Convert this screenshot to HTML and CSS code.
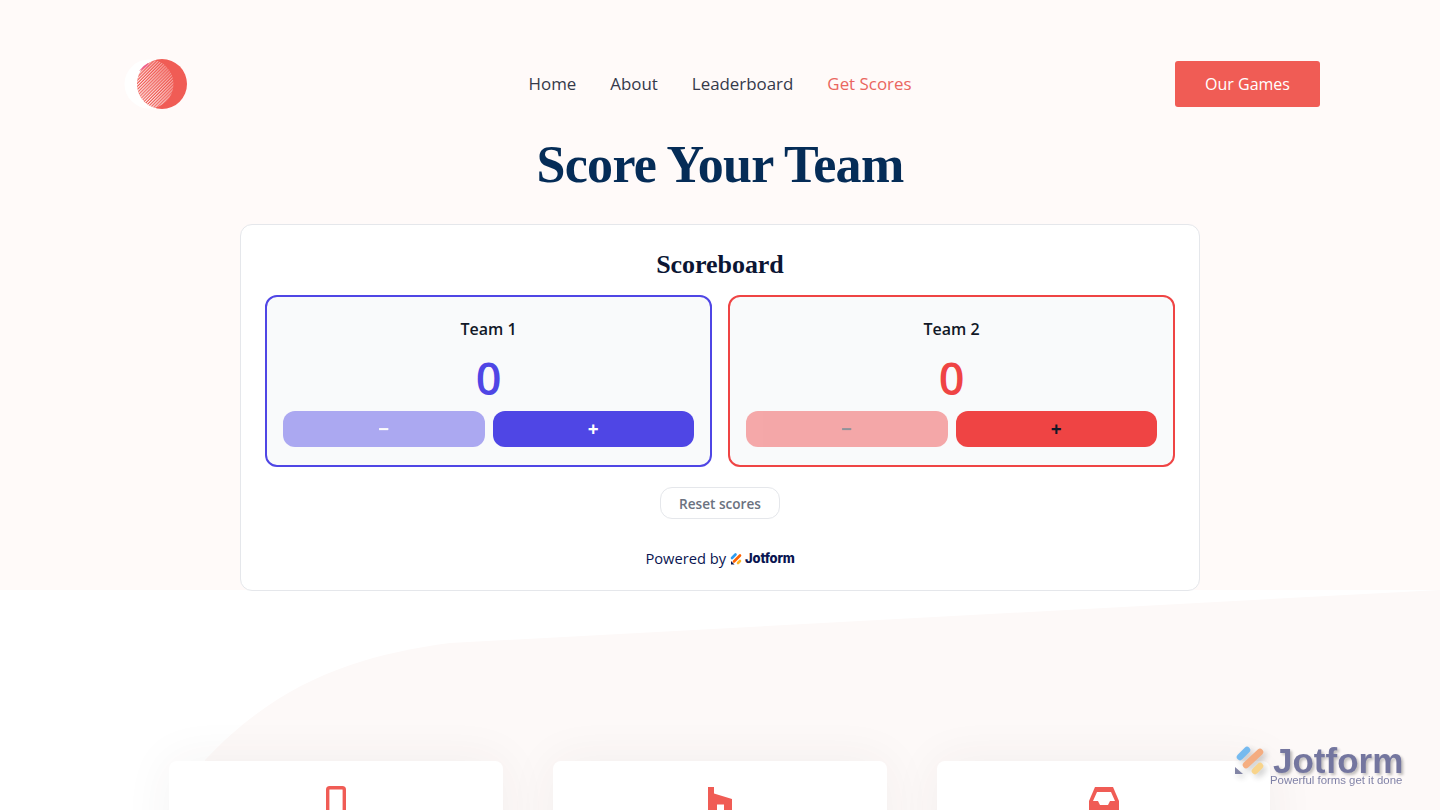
FILE: index.html
```html
<!DOCTYPE html>
<html lang="en">
<head>
<meta charset="utf-8">
<title>Score Your Team</title>
<link rel="stylesheet" href="styles.css">
</head>
<body>
<section class="hero">
  <header class="nav">
    <svg class="logo" width="64" height="52" viewBox="0 0 64 52" aria-hidden="true">
      <defs>
        <clipPath id="lens"><circle cx="26" cy="26" r="24.5"/></clipPath>
        <linearGradient id="fade" x1="0" y1="1" x2="1" y2="0.2"><stop offset="0.1" stop-color="#fff"/><stop offset="0.95" stop-color="#555"/></linearGradient>
        <mask id="fade-mask" maskUnits="userSpaceOnUse" x="0" y="0" width="64" height="52"><rect x="14" y="1" width="38" height="50" fill="url(#fade)"/></mask>
        <pattern id="hatch" width="2.2" height="2.2" patternUnits="userSpaceOnUse" patternTransform="rotate(-45)"><rect width="2.2" height="1.1" fill="#fff"/></pattern>
      </defs>
      <circle cx="26" cy="26" r="24.5" fill="#fff"/>
      <circle cx="39" cy="26" r="25" fill="#f05c55"/>
      <g clip-path="url(#lens)">
        <path d="M25 5 A25 25 0 0 0 16 13 L26 8 Z" fill="#e8306f" fill-opacity=".75"/>
        <circle cx="39" cy="26" r="25" fill="url(#hatch)" mask="url(#fade-mask)"/>
      </g>
    </svg>
    <nav class="links">
      <a class="link">Home</a>
      <a class="link">About</a>
      <a class="link">Leaderboard</a>
      <a class="link active">Get Scores</a>
    </nav>
    <a class="cta">Our Games</a>
  </header>
  <h1 class="title">Score Your Team</h1>
  <main class="card">
    <h2 class="card-title">Scoreboard</h2>
    <div class="teams">
      <div class="team team-a">
        <div class="team-name">Team 1</div>
        <div class="score">0</div>
        <div class="actions">
          <button class="btn minus">−</button>
          <button class="btn plus">+</button>
        </div>
      </div>
      <div class="team team-b">
        <div class="team-name">Team 2</div>
        <div class="score">0</div>
        <div class="actions">
          <button class="btn minus">−</button>
          <button class="btn plus">+</button>
        </div>
      </div>
    </div>
    <button class="reset">Reset scores</button>
    <div class="powered">Powered by
      <svg class="mini-mark" width="12" height="13" viewBox="0 0 12 13" aria-hidden="true">
        <path d="M2 6 5.5 2.5" stroke="#2e9cf0" stroke-width="2.6" stroke-linecap="round"/>
        <path d="M4 9.5 10 3.5" stroke="#ff6100" stroke-width="2.6" stroke-linecap="round"/>
        <path d="M8 11 10 9" stroke="#ffb629" stroke-width="2.6" stroke-linecap="round"/>
        <path d="M1 9V12.5H4.5Z" fill="#0a1551"/>
      </svg><span class="mini-word">Jotform</span>
    </div>
  </main>
</section>
<section class="features">
  <svg class="swoosh" width="1440" height="220" viewBox="0 0 1440 220" aria-hidden="true">
    <path d="M1440 0 L450 53 C360 65 280 90 205 170 L205 220 L1440 220 Z" fill="#fdf9f8"/>
  </svg>
  <div class="cards">
    <article class="feature">
      <svg class="phone" width="20" height="28" viewBox="0 0 20 28" aria-hidden="true"><rect x="1.7" y="1.7" width="16.6" height="30" rx="2" fill="none" stroke="#f05c55" stroke-width="3.4"/></svg>
    </article>
    <article class="feature">
      <svg width="24" height="24" viewBox="0 0 24 24" aria-hidden="true"><path d="M0 0H6V6.5L24 12V24H0Z" fill="#f05c55"/><path d="M9 17.5H16V24H9Z" fill="#fff"/></svg>
    </article>
    <article class="feature">
      <svg width="30" height="24" viewBox="0 0 30 24" aria-hidden="true"><path d="M6 0H24L30 14V24H0V14Z" fill="#f05c55"/><path d="M8 5H22L26 14H21L19 18H11L9 14H4Z" fill="#fff"/></svg>
    </article>
  </div>
  <div class="watermark">
    <svg class="wm-mark" width="34" height="34" viewBox="0 0 34 34" aria-hidden="true">
      <path d="M5 12 12 5" stroke="#5fb0ef" stroke-width="6.5" stroke-linecap="round"/>
      <path d="M11 20 25 7" stroke="#f4a06c" stroke-width="6.5" stroke-linecap="round"/>
      <path d="M20 26 25 21" stroke="#f7cd77" stroke-width="6.5" stroke-linecap="round"/>
      <path d="M0 22V29H8Z" fill="#6d7096"/>
    </svg>
    <div class="wm-text">
      <div class="wm-word">Jotform</div>
      <div class="wm-tag">Powerful forms get it done</div>
    </div>
  </div>
</section>
</body>
</html>
```
FILE: styles.css
```css
html, body {
  margin: 0;
  padding: 0;
  height: 810px;
  overflow: hidden;
  background: #fff;
  font-family: "Open Sans", "Liberation Sans", sans-serif;
}
.hero {
  height: 590px;
  background: #fffaf9;
  box-sizing: border-box;
  padding-top: 58px;
}
.nav {
  width: 1200px;
  margin: 0 auto;
  height: 52px;
  display: grid;
  grid-template-columns: 1fr auto 1fr;
  align-items: center;
}
.logo { display: block; margin-left: 3px; }
.links {
  display: flex;
  gap: 34px;
  font-size: 16.9px;
  line-height: 50px;
}
.link { color: #35394a; }
.link.active { color: #ea6660; }
.cta {
  justify-self: end;
  width: 145px;
  height: 46px;
  background: #f05c55;
  color: #fff;
  border-radius: 3px;
  font-size: 16px;
  display: flex;
  align-items: center;
  justify-content: center;
}
.title {
  margin: 25px 0 0;
  height: 60px;
  line-height: 60px;
  text-align: center;
  font-family: "Liberation Serif", "DejaVu Serif", serif;
  font-size: 52px;
  letter-spacing: -.7px;
  font-weight: 700;
  color: #052c57;
}
.card {
  position: relative;
  z-index: 1;
  width: 960px;
  height: 367px;
  margin: 29px auto 0;
  box-sizing: border-box;
  background: #fff;
  border: 1px solid #e5e7eb;
  border-radius: 12px;
  padding: 24px;
  display: flex;
  flex-direction: column;
  align-items: center;
}
.card-title {
  margin: 1px 0 0;
  height: 30px;
  line-height: 30px;
  font-family: "Liberation Serif", "DejaVu Serif", serif;
  font-size: 26px;
  letter-spacing: -.05px;
  font-weight: 700;
  color: #0b1533;
}
.teams {
  width: 100%;
  display: grid;
  grid-template-columns: 1fr 1fr;
  gap: 16px;
  margin-top: 15px;
}
.team {
  height: 172px;
  box-sizing: border-box;
  border: 2px solid;
  border-radius: 12px;
  background: #f9fafb;
  padding: 16px;
  display: flex;
  flex-direction: column;
  align-items: center;
}
.team-a { border-color: #4f46e5; --accent: #4f46e5; --on: #fff; }
.team-b { border-color: #ef4444; --accent: #ef4444; --on: #111827; }
.team-name {
  margin-top: 4px;
  height: 24px;
  line-height: 24px;
  font-size: 16px;
  font-weight: 600;
  color: #111827;
}
.score {
  margin-top: 10px;
  height: 54px;
  line-height: 54px;
  font-size: 45px;
  font-weight: 600;
  color: var(--accent);
}
.actions {
  width: 100%;
  display: flex;
  gap: 8px;
  margin-top: 6px;
}
.btn {
  flex: 1;
  height: 36px;
  border: 0;
  padding: 0;
  border-radius: 12px;
  background: var(--accent);
  color: var(--on);
  font-family: inherit;
  font-size: 19px;
  line-height: 36px;
  font-weight: 700;
}
.btn.minus { opacity: .45; }
.reset {
  margin-top: 20px;
  width: 120px;
  height: 32px;
  flex: none;
  box-sizing: border-box;
  border: 1px solid #e5e7eb;
  border-radius: 12px;
  background: #fff;
  color: #6b7280;
  font-family: inherit;
  font-size: 13.6px;
  font-weight: 600;
  padding: 0;
}
.powered {
  margin-top: 29px;
  height: 22px;
  display: flex;
  align-items: center;
  font-size: 14.7px;
  color: #0a1551;
}
.mini-mark { margin-left: 4px; margin-right: 3px; }
.mini-word {
  font-family: "Inter", "Open Sans", sans-serif;
  font-size: 13px;
  font-weight: 800;
  letter-spacing: -.2px;
}
.features {
  position: relative;
  height: 220px;
}
.swoosh {
  position: absolute;
  left: 0;
  top: 0;
}
.watermark {
  position: absolute;
  left: 1235px;
  top: 155px;
  display: flex;
  opacity: .85;
  filter: blur(.4px);
}
.wm-mark { filter: drop-shadow(3px 3px 3px rgba(0,0,0,.25)); }
.wm-text { position: relative; width: 136px; margin-left: 1px; }
.wm-word {
  margin-left: 3px;
  height: 29px;
  line-height: 32px;
  font-family: "Liberation Sans", sans-serif;
  font-size: 35px;
  font-weight: 700;
  color: #5d6090;
  text-shadow: 2px 2px 3px rgba(0,0,0,.3);
}
.wm-tag {
  height: 12px;
  line-height: 12px;
  font-family: "Liberation Sans", sans-serif;
  font-size: 11.4px;
  color: #6a6d99;
  white-space: nowrap;
}
.cards {
  position: relative;
  display: flex;
  gap: 50px;
  padding: 171px 0 0 169px;
}
.feature {
  width: 334px;
  height: 220px;
  box-sizing: border-box;
  background: #fff;
  border-radius: 8px;
  padding-top: 26px;
  text-align: center;
  box-shadow: 0 0 50px rgba(60,50,50,.06);
}
.feature:nth-child(3) { width: 333px; }
.feature svg { display: block; margin: 0 auto; }
.feature .phone { margin-top: -1px; }
```
